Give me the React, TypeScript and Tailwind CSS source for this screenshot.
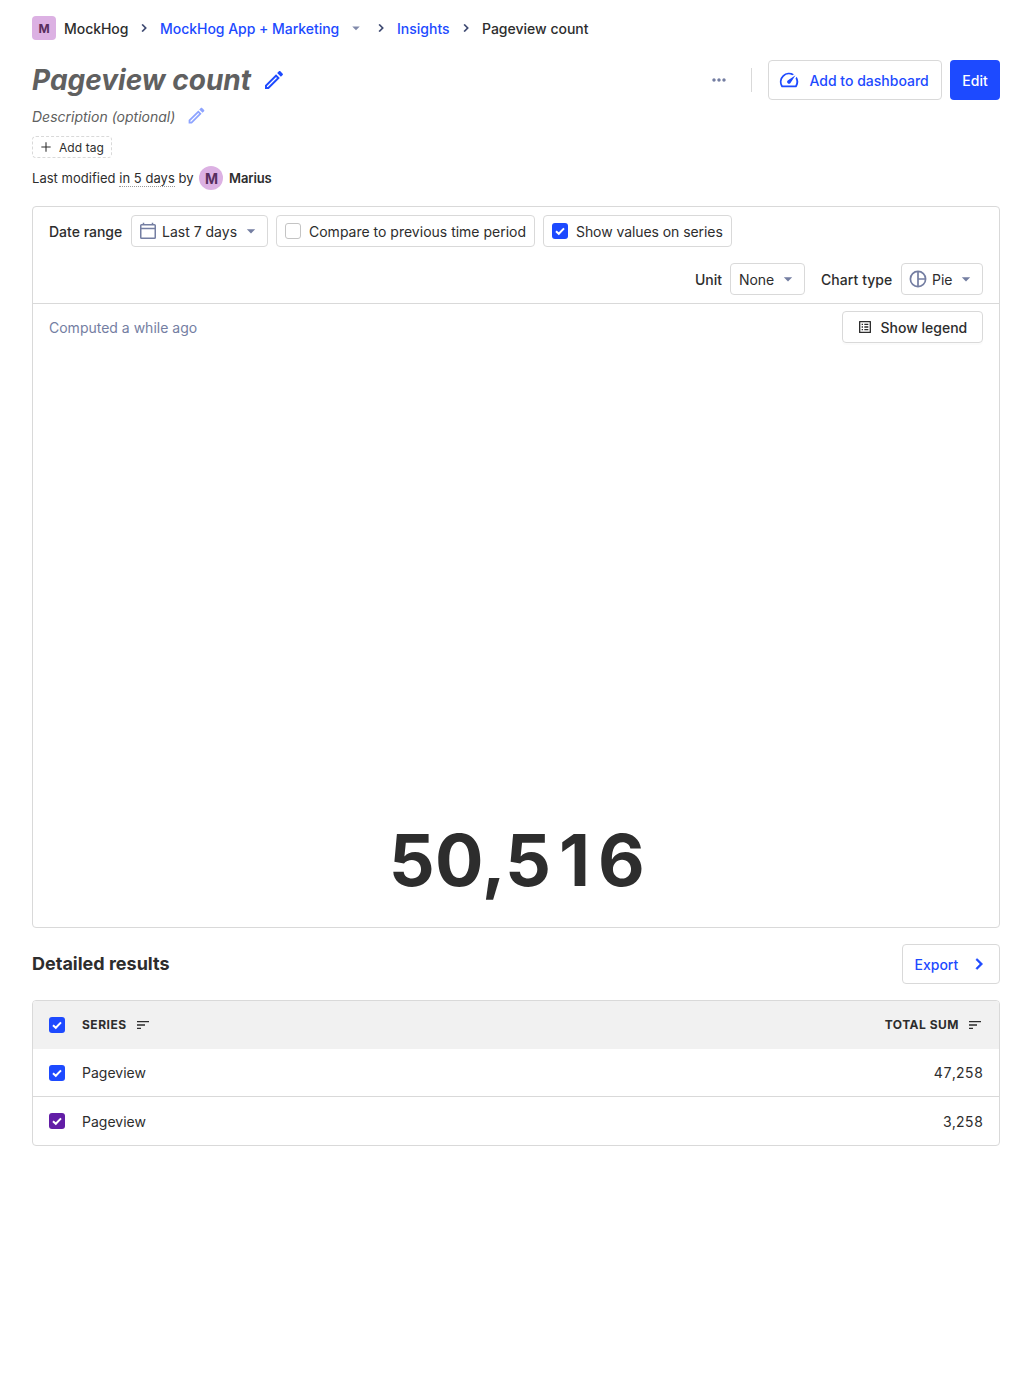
import React from 'react';

type IconProps = { d: string; className?: string };

function Icon({ d, className = 'size-6' }: IconProps) {
  return (
    <svg viewBox="0 0 24 24" fill="currentColor" className={`shrink-0 ${className}`}>
      <path d={d} />
    </svg>
  );
}

const PENCIL =
  'M14.06 9.02l.92.92L5.92 19H5v-.92l9.06-9.06M17.66 3c-.25 0-.51.1-.7.29l-1.83 1.83 3.75 3.75 1.83-1.83c.39-.39.39-1.02 0-1.41l-2.34-2.34c-.2-.2-.45-.29-.71-.29zm-3.6 3.19L3 17.25V21h3.75L17.81 9.94l-3.75-3.75z';
const GAUGE =
  'M20.38 8.57l-1.23 1.85a8 8 0 0 1-.22 7.58H5.07A8 8 0 0 1 15.58 6.85l1.85-1.23A10 10 0 0 0 3.35 19a2 2 0 0 0 1.72 1h13.85a2 2 0 0 0 1.74-1 10 10 0 0 0-.27-10.44zm-9.79 6.84a2 2 0 0 0 2.83 0l5.66-8.49-8.49 5.66a2 2 0 0 0 0 2.83z';
const CHEVRON = 'M8.59 16.59 13.17 12 8.59 7.41 10 6l6 6-6 6z';
const CARET = 'M7 10l5 5 5-5z';
const SORT = 'M3 18h6v-2H3v2zM3 6v2h18V6H3zm0 7h12v-2H3v2z';
const LIST =
  'M19 5v14H5V5h14m1.1-2H3.9c-.5 0-.9.4-.9.9v16.2c0 .4.4.9.9.9h16.2c.4 0 .9-.5.9-.9V3.9c0-.5-.5-.9-.9-.9zM11 7h6v2h-6V7zm0 4h6v2h-6v-2zm0 4h6v2h-6zM7 7h2v2H7zm0 4h2v2H7zm0 4h2v2H7z';
const DOTS =
  'M6 10c-1.1 0-2 .9-2 2s.9 2 2 2 2-.9 2-2-.9-2-2-2zm12 0c-1.1 0-2 .9-2 2s.9 2 2 2 2-.9 2-2-.9-2-2-2zm-6 0c-1.1 0-2 .9-2 2s.9 2 2 2 2-.9 2-2-.9-2-2-2z';
const PLUS = 'M19 12.8h-6.2V19h-1.6v-6.2H5v-1.6h6.2V5h1.6v6.2H19z';

function Separator() {
  return <Icon d={CHEVRON} className="mx-2 size-4 stroke-current stroke-[0.4] text-[#35416b]" />;
}

function Check({ color = 'bg-[#1d4aff]' }: { color?: string }) {
  return (
    <span className={`flex size-4 shrink-0 items-center justify-center rounded-[3px] ${color}`}>
      <svg viewBox="0 0 16 16" fill="none" stroke="#fff" strokeWidth="2" className="size-4">
        <path d="M4 8.2 6.8 10.8 12 5.4" />
      </svg>
    </span>
  );
}

function Calendar() {
  return (
    <svg viewBox="0 0 18 18" fill="none" stroke="#747ea2" strokeWidth="1.5" className="size-[18px] shrink-0">
      <rect x="1.75" y="2.75" width="14.5" height="13.5" rx="0.8" />
      <path d="M1.5 6.5h15M4.5 0.7v2M13.5 0.7v2" />
    </svg>
  );
}

function Pie() {
  return (
    <svg viewBox="0 0 18 18" fill="none" stroke="#747ea2" strokeWidth="1.7" className="size-[18px] shrink-0">
      <circle cx="9" cy="9" r="7.6" />
      <path d="M9 1.4v15.2M9 9h7.6" />
    </svg>
  );
}

function BigNumber({ value }: { value: string }) {
  return (
    <div className="mt-auto mb-[22px] flex justify-center pl-px text-[72px] leading-[90px] font-bold">
      {value.split('').map((char, i) => (
        <span key={i} className={char === ',' ? 'w-[23px] text-center' : 'w-[46.6px] text-center'}>
          {char}
        </span>
      ))}
    </div>
  );
}

const control = 'flex h-8 items-center whitespace-nowrap rounded border border-[#d9d9d9]';

export default function App() {
  return (
    <div className="flex min-h-[1374px] w-[1032px] flex-col bg-white px-8 pt-4 font-['Inter',sans-serif] text-sm text-[#2d2d2d] [font-optical-sizing:none]">
      <nav className="flex h-6 items-center font-medium whitespace-nowrap">
        <span className="mr-2 flex size-6 items-center justify-center rounded bg-[#dcb1e3] pt-px text-xs font-bold text-[#572e5e]">M</span>
        <span className="h-5 w-16 pt-px tracking-[-0.05px]">MockHog</span>
        <Separator />
        <a className="h-5 w-[179px] pt-px tracking-[-0.03px] text-[#1d4aff]">MockHog App + Marketing</a>
        <Icon d={CARET} className="mx-2 size-[18px] text-[#8089aa]" />
        <Icon d={CHEVRON} className="mr-2 size-4 stroke-current stroke-[0.4] text-[#35416b]" />
        <a className="h-5 w-[53px] pt-px text-[#1d4aff]">Insights</a>
        <Separator />
        <span className="h-5 pt-px">Pageview count</span>
      </nav>

      <header className="mt-5 flex h-10 items-center whitespace-nowrap">
        <h1 className="w-[219px] text-[28px] leading-10 font-bold text-[#606060] italic">Pageview count</h1>
        <Icon d={PENCIL} className="ml-[11px] size-6 text-[#1d4aff]" />
        <Icon d={DOTS} className="mr-[22px] mb-px ml-auto size-5 text-[#747ea2]" />
        <span className="h-6 w-px bg-[#d9d9d9]" />
        <button className="ml-4 flex h-10 w-[174px] items-center rounded border border-[#d9d9d9] pl-[9px] font-medium text-[#1d4aff]">
          <Icon d={GAUGE} className="mr-[9.5px] mb-px size-[22px]" />
          <span className="pt-px">Add to dashboard</span>
        </button>
        <button className="ml-2 h-10 w-[50px] rounded bg-[#1d4aff] pt-px font-medium text-white">Edit</button>
      </header>

      <div className="mt-[5px] flex h-6 items-center">
        <span className="text-[#606060] italic">Description (optional)</span>
        <Icon d={PENCIL} className="mb-[3px] ml-[10.5px] size-[21px] text-[#8ea4ff]" />
      </div>

      <button className="mt-[7px] flex h-[22px] w-20 items-center rounded border border-dashed border-[#d9d9d9] pl-[5px] text-xs">
        <Icon d={PLUS} className="mr-[5px] size-4" />
        <span className="pt-px tracking-[0.08px]">Add tag</span>
      </button>

      <div className="mt-2 flex h-6 items-center text-[13px]">
        <span className="w-[161px] pt-px tracking-[0.03px] whitespace-nowrap">
          Last modified <span className="border-b border-dotted border-[#999]">in 5 days</span> by
        </span>
        <span className="mx-[6px] flex size-6 items-center justify-center rounded-full bg-[#dcb1e3] pt-px pl-px text-sm font-bold text-[#572e5e]">M</span>
        <span className="pt-px font-semibold tracking-[-0.1px]">Marius</span>
      </div>

      <section className="mt-4 flex h-[722px] flex-col rounded border border-[#d9d9d9]">
        <div className="flex flex-col border-b border-[#d9d9d9] px-4">
          <div className="flex h-12 items-center gap-2">
            <span className="w-[74px] pt-px font-medium whitespace-nowrap">Date range</span>
            <div className={`${control} w-[137px] pl-[7px]`}>
              <Calendar />
              <span className="mr-1 ml-[5px] pt-px">Last 7 days</span>
              <Icon d={CARET} className="size-5 text-[#747ea2]" />
            </div>
            <div className={`${control} w-[259px] gap-2 pl-2`}>
              <span className="size-4 rounded-[3px] border border-[#c4c4c4]" />
              <span className="pt-px">Compare to previous time period</span>
            </div>
            <div className={`${control} w-[189px] gap-2 pl-2`}>
              <Check />
              <span className="pt-px tracking-[-0.07px]">Show values on series</span>
            </div>
          </div>
          <div className="flex h-12 items-center justify-end gap-2">
            <span className="w-[27px] pt-px font-medium">Unit</span>
            <div className={`${control} w-[75px] pl-2`}>
              <span className="mr-1 pt-px tracking-[-0.1px]">None</span>
              <Icon d={CARET} className="size-5 text-[#747ea2]" />
            </div>
            <span className="ml-2 w-[72px] pt-px font-medium whitespace-nowrap tracking-[0.06px]">Chart type</span>
            <div className={`${control} w-[82px] pl-[7px]`}>
              <Pie />
              <span className="mr-[3px] ml-[5px] pt-px">Pie</span>
              <Icon d={CARET} className="size-5 text-[#747ea2]" />
            </div>
          </div>
        </div>
        <div className="flex items-center justify-between px-4 pt-[7px]">
          <span className="pt-px text-[#747ea2]">Computed a while ago</span>
          <button className="flex h-8 w-[141px] items-center rounded border border-[#d9d9d9] pl-[14px] font-medium whitespace-nowrap shadow-[0_2px_0_rgba(0,0,0,0.016)]">
            <Icon d={LIST} className="mr-[7.5px] size-4" />
            <span className="pt-px">Show legend</span>
          </button>
        </div>
        <BigNumber value="50,516" />
      </section>

      <div className="mt-4 flex h-10 items-center justify-between">
        <h2 className="text-lg leading-10 font-bold">Detailed results</h2>
        <button className="flex h-10 w-[98px] items-center rounded border border-[#d9d9d9] pl-[11.5px] font-medium text-[#1d4aff]">
          <span className="mr-[9.5px] pt-px">Export</span>
          <Icon d={CHEVRON} className="mb-px size-[22px] stroke-current stroke-[0.6]" />
        </button>
      </div>

      <section className="mt-4 flex h-[146px] flex-col overflow-hidden rounded border border-[#d9d9d9]">
        <div className="flex h-12 items-center bg-[#f1f1f1] px-4 text-xs font-bold tracking-[0.5px]">
          <Check />
          <span className="mr-2 ml-[17px] w-[45px]">SERIES</span>
          <Icon d={SORT} className="size-4" />
          <span className="mr-2 ml-auto">TOTAL SUM</span>
          <Icon d={SORT} className="size-4" />
        </div>
        <div className="flex h-12 items-center border-b border-[#d9d9d9] px-4">
          <Check />
          <span className="ml-[17px]">Pageview</span>
          <span className="ml-auto tabular-nums">47,258</span>
        </div>
        <div className="flex h-12 items-center px-4">
          <Check color="bg-[#621da6]" />
          <span className="ml-[17px] pt-px">Pageview</span>
          <span className="ml-auto pt-px tabular-nums">3,258</span>
        </div>
      </section>
    </div>
  );
}
